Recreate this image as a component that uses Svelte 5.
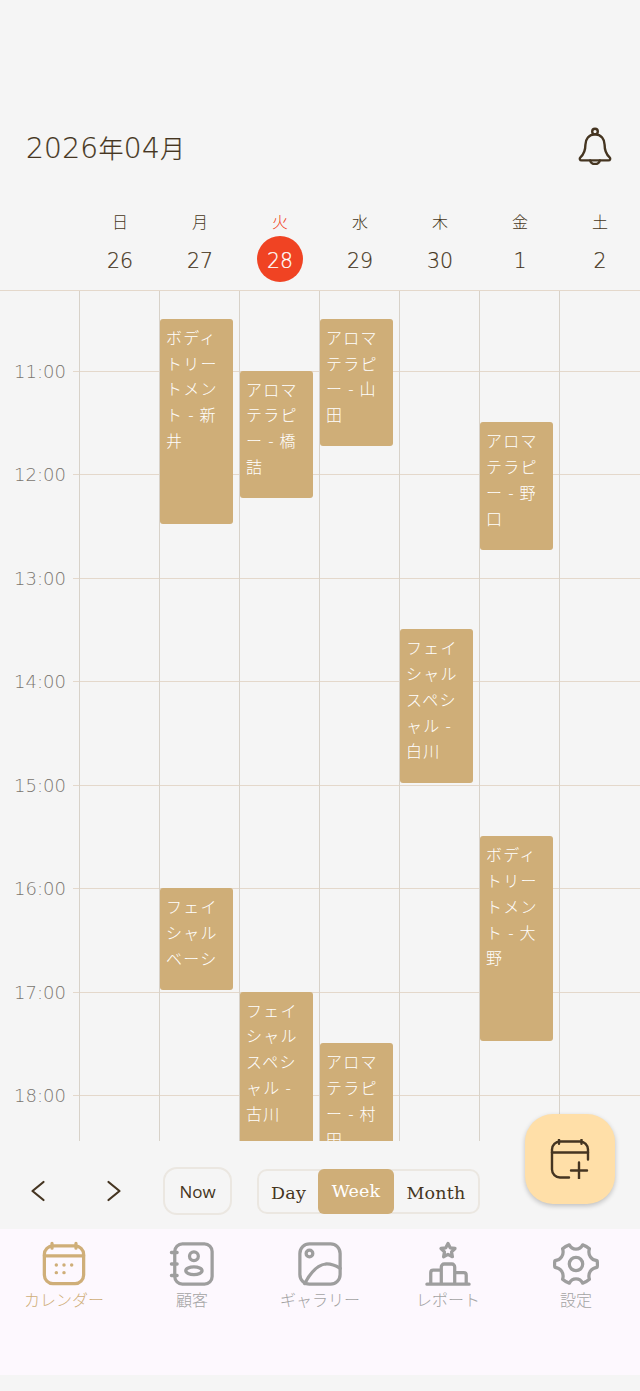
<script>
  const days = [
    { w: '日', d: 26 }, { w: '月', d: 27 }, { w: '火', d: 28, today: true },
    { w: '水', d: 29 }, { w: '木', d: 30 }, { w: '金', d: 1 }, { w: '土', d: 2 }
  ];
  const hours = [11, 12, 13, 14, 15, 16, 17, 18, 19];
  const HOUR = 103.5;
  const START = 10.22;
  const events = [
    { col: 1, from: 10.5, to: 12.5, text: 'ボディトリートメント - 新井' },
    { col: 2, from: 11, to: 12.25, text: 'アロマテラピー - 橋詰' },
    { col: 3, from: 10.5, to: 11.75, text: 'アロマテラピー - 山田' },
    { col: 5, from: 11.5, to: 12.75, text: 'アロマテラピー - 野口' },
    { col: 4, from: 13.5, to: 15, text: 'フェイシャルスペシャル - 白川' },
    { col: 1, from: 16, to: 17, text: 'フェイシャルベーシ' },
    { col: 5, from: 15.5, to: 17.5, text: 'ボディトリートメント - 大野' },
    { col: 2, from: 17, to: 18.5, text: 'フェイシャルスペシャル - 古川' },
    { col: 3, from: 17.5, to: 18.75, text: 'アロマテラピー - 村田' }
  ];
</script>

<div class="page">
  <header class="top">
    <h1>2026<span>年</span>04<span>月</span></h1>
    <svg class="bell" viewBox="0 0 36 40" fill="none" stroke="currentColor" stroke-width="2.4" stroke-linejoin="round" stroke-linecap="round">
      <circle cx="18" cy="4.6" r="2.8" />
      <path d="M18 7.4c-6.2 0-9.6 4.6-9.6 10.4 0 6.6-1.4 9.4-5 12.6-1.2 1.1-.6 3 1.200 3h26.800c1.800 0 2.400-1.900 1.200-3-3.600-3.200-5-6-5-12.600 0-5.800-3.400-10.400-9.600-10.400z" />
      <path d="M13.200 33.400a4.900 4.400 0 0 0 9.600 0" />
    </svg>
  </header>

  <div class="days">
    <div class="gutter"></div>
    {#each days as day}
      <div class="day" class:today={day.today}>
        <span class="wd">{day.w}</span>
        <span class="num">{day.d}</span>
      </div>
    {/each}
  </div>

  <div class="grid">
    <div class="rows" style="margin-top: {(11 - START) * HOUR - HOUR}px">
      {#each hours as h}
        <div class="row" style="height: {HOUR}px">
          <span class="time">{h}:00</span>
        </div>
      {/each}
    </div>
    <div class="vlines">
      {#each days as _}<i></i>{/each}
    </div>
    {#each events as e}
      <div
        class="event"
        style="left: {80 + e.col * 80}px; top: {(e.from - START) * HOUR - 1}px; height: {(e.to - e.from) * HOUR - 2}px"
      >{e.text}</div>
    {/each}
  </div>

  <div class="controls">
    <button class="chev" aria-label="前へ">
      <svg viewBox="0 0 16 24" fill="none" stroke="currentColor" stroke-width="2.200" stroke-linecap="round" stroke-linejoin="round"><path d="M13.500 3 2.500 12l11 9" /></svg>
    </button>
    <button class="chev" aria-label="次へ">
      <svg viewBox="0 0 16 24" fill="none" stroke="currentColor" stroke-width="2.200" stroke-linecap="round" stroke-linejoin="round"><path d="m2.500 3 11 9-11 9" /></svg>
    </button>
    <button class="now">Now</button>
    <div class="seg">
      <span class="s-day">Day</span>
      <span class="s-week">Week</span>
      <span class="s-month">Month</span>
    </div>
    <button class="fab" aria-label="予定を追加">
      <svg viewBox="0 0 40 40" fill="none" stroke="currentColor" stroke-width="2.400" stroke-linecap="round" stroke-linejoin="round">
        <path d="M19 38.500h-9a8 8 0 0 1-8-8V10.500a8 8 0 0 1 8-8h20a8 8 0 0 1 8 8v10" />
        <path d="M2 13.500h36M9 .8v4M31.500 .8v4M29 23.500v16M21 31.500h16" />
      </svg>
    </button>
  </div>

  <nav class="tabs">
    <div class="tab active">
      <svg viewBox="0 0 48 48" fill="none" stroke="currentColor" stroke-width="3.400" stroke-linecap="round" stroke-linejoin="round">
        <rect x="3.500" y="5" width="41" height="39.500" rx="9" />
        <path d="M3.500 15.500h41M11.500 2.500v5M36.500 2.500v5" />
        <g fill="currentColor" stroke="none">
          <circle cx="16" cy="25" r="1.800" /><circle cx="24" cy="25" r="1.800" /><circle cx="32" cy="25" r="1.800" />
          <circle cx="16" cy="33" r="1.800" /><circle cx="24" cy="33" r="1.800" />
        </g>
      </svg>
      <span>カレンダー</span>
    </div>
    <div class="tab">
      <svg viewBox="0 0 48 48" fill="none" stroke="currentColor" stroke-width="3.400" stroke-linecap="round" stroke-linejoin="round">
        <rect x="6" y="3" width="39" height="42" rx="8" />
        <path d="M2.500 12h6M2.500 24h6M2.500 36h6" />
        <circle cx="26" cy="16" r="4.600" />
        <ellipse cx="26" cy="31" rx="8.500" ry="4" />
      </svg>
      <span>顧客</span>
    </div>
    <div class="tab">
      <svg viewBox="0 0 48 48" fill="none" stroke="currentColor" stroke-width="3.400" stroke-linecap="round" stroke-linejoin="round">
        <rect x="3" y="3" width="42" height="42" rx="10" />
        <circle cx="13" cy="13" r="3.500" />
        <path d="M8 44.500C13 35 20 25 30 24c6-.4 10 1.500 15 4.500" />
      </svg>
      <span>ギャラリー</span>
    </div>
    <div class="tab">
      <svg viewBox="0 0 48 48" fill="none" stroke="currentColor" stroke-width="3.400" stroke-linecap="round" stroke-linejoin="round">
        <path d="m24 2.500 2.300 4.600 5 .7-3.600 3.600.9 5-4.600-2.400-4.600 2.400.9-5-3.600-3.600 5-.7z" />
        <path d="M2 45h44M6 45V33a2.500 2.500 0 0 1 2.500-2.500H17M17 45V27a3 3 0 0 1 3-3h8a3 3 0 0 1 3 3v18M31 33h9.500a2.500 2.500 0 0 1 2.500 2.500V45" />
      </svg>
      <span>レポート</span>
    </div>
    <div class="tab">
      <svg viewBox="0 0 48 48" fill="none" stroke="currentColor" stroke-width="3.400" stroke-linecap="round" stroke-linejoin="round">
        <path d="M17 4c1.500 3 4 4.500 7 4.500S29.500 7 31 4c2.500.8 5 2.200 7 4-1 3.200-.7 6 1 8.500 1.600 2.500 4 3.700 7 4 .5 2.500.5 5 0 7-3 .3-5.400 1.500-7 4-1.700 2.500-2 5.300-1 8.500-2 1.800-4.500 3.200-7 4-1.500-3-4-4.500-7-4.500S18.500 41 17 44c-2.500-.8-5-2.200-7-4 1-3.200.7-6-1-8.500-1.600-2.500-4-3.700-7-4-.5-2-.5-4.500 0-7 3-.3 5.400-1.500 7-4 1.700-2.500 2-5.300 1-8.500 2-1.800 4.500-3.200 7-4z" />
        <circle cx="24" cy="24" r="7" />
      </svg>
      <span>設定</span>
    </div>
  </nav>
</div>

<style>
  :global(body) {
    margin: 0;
    background: #f5f5f5;
  }
  .page {
    width: 640px;
    height: 1391px;
    background: #f5f5f5;
    color: #453521;
    display: flex;
    flex-direction: column;
    overflow: hidden;
    font-family: "Noto Sans CJK JP", "Noto Sans", sans-serif;
  }
  .top {
    height: 202px;
    box-sizing: border-box;
    padding: 123px 26px 0;
    display: flex;
    justify-content: space-between;
    align-items: flex-start;
  }
  h1 {
    margin: 0;
    font-family: "DejaVu Sans", "Noto Sans CJK JP", sans-serif;
    font-weight: 200;
    font-size: 28px;
    line-height: 48px;
    letter-spacing: 0.300px;
    -webkit-text-stroke: 0.2px currentColor;
  }
  h1 span {
    font-family: "Noto Sans CJK JP", sans-serif;
    font-weight: 300;
    font-size: 25px;
  }
  .bell {
    width: 36px;
    height: 40px;
    margin: 4px 1px 0 0;
  }
  .days {
    display: flex;
    height: 88px;
    flex: none;
    box-sizing: border-box;
  }
  .gutter {
    width: 80px;
    flex: none;
  }
  .day {
    width: 80px;
    flex: none;
    display: flex;
    flex-direction: column;
    align-items: center;
  }
  .wd {
    height: 34px;
    line-height: 38px;
    font-size: 16px;
    font-weight: 300;
  }
  .num {
    width: 46px;
    height: 46px;
    border-radius: 50%;
    text-align: center;
    line-height: 50px;
    font-size: 20.500px;
    font-family: "DejaVu Sans", sans-serif;
    font-weight: 200;
    -webkit-text-stroke: 0.2px currentColor;
  }
  .today .wd {
    color: #f04323;
  }
  .today .num {
    background: #f04323;
    color: #fff;
  }
  .grid {
    position: relative;
    height: 851px;
    flex: none;
    overflow: hidden;
    border-top: 1px solid #e4d8cb;
    box-sizing: border-box;
  }
  .rows {
    display: flex;
    flex-direction: column;
  }
  .row {
    flex: none;
    position: relative;
    box-sizing: border-box;
    border-bottom: 1px solid #e4d8cb;
    margin-left: 73px;
  }
  .time {
    position: absolute;
    left: -73px;
    width: 80px;
    bottom: -13px;
    text-align: center;
    font-family: "DejaVu Sans", sans-serif;
    font-weight: 200;
    font-size: 18px;
    line-height: 24px;
    color: #7b7670;
  }
  .vlines {
    position: absolute;
    inset: 0 0 0 79px;
    display: flex;
  }
  .vlines i {
    width: 80px;
    flex: none;
    box-sizing: border-box;
    border-left: 1px solid #d8d2c9;
  }
  .event {
    position: absolute;
    width: 73px;
    box-sizing: border-box;
    padding: 6px 4px 0 6px;
    border-radius: 3px;
    background: #cfae78;
    color: #fff;
    font-size: 16px;
    font-weight: 300;
    line-height: 25.700px;
    letter-spacing: 1.300px;
    word-break: break-all;
    overflow: hidden;
  }
  .controls {
    position: relative;
    flex: none;
    height: 88px;
    box-sizing: border-box;
    padding-top: 12px;
    display: flex;
    align-items: center;
  }
  button {
    font: inherit;
    color: inherit;
    background: none;
    border: 0;
    padding: 0;
  }
  .chev {
    width: 76px;
    height: 30px;
    display: flex;
    justify-content: center;
    align-items: center;
  }
  .chev svg {
    width: 16px;
    height: 24px;
  }
  .now {
    margin-left: 11px;
    width: 69px;
    height: 48px;
    box-sizing: border-box;
    border: 2px solid #ebe7e1;
    border-radius: 14px;
    font-family: "Open Sans", sans-serif;
    font-size: 17px;
  }
  .seg {
    margin-left: 25px;
    width: 223px;
    height: 45px;
    box-sizing: border-box;
    border: 2px solid #ebe7e1;
    border-radius: 10px;
    display: flex;
    align-items: stretch;
    font-family: "DejaVu Serif", serif;
    font-size: 17.500px;
    letter-spacing: 0.200px;
    text-align: center;
    line-height: 45px;
  }
  .seg span {
    display: block;
  }
  .s-day { width: 59px; }
  .s-week {
    width: 76px;
    margin: -2px 0;
    background: #cfae78;
    color: #fff;
    border-radius: 6px;
  }
  .s-month { flex: 1; }
  .fab {
    position: absolute;
    left: 525px;
    top: -27px;
    width: 90px;
    height: 90px;
    border-radius: 28px;
    background: #ffdfa8;
    box-shadow: 0 2px 5px rgba(0, 0, 0, 0.22);
    display: flex;
    align-items: center;
    justify-content: center;
  }
  .fab svg {
    width: 40px;
    height: 40px;
  }
  .tabs {
    flex: none;
    height: 146px;
    background: #fdf8fe;
    display: flex;
    box-sizing: border-box;
    padding-top: 11px;
  }
  .tab {
    width: 128px;
    display: flex;
    flex-direction: column;
    align-items: center;
    color: #9e9e9e;
  }
  .tab svg {
    width: 46px;
    height: 46px;
    margin: 1px 0 0;
  }
  .tab span {
    font-size: 16px;
    font-weight: 300;
    line-height: 24px;
    color: #a3a3a3;
  }
  .tab.active,
  .tab.active span {
    color: #cfae78;
  }
</style>
